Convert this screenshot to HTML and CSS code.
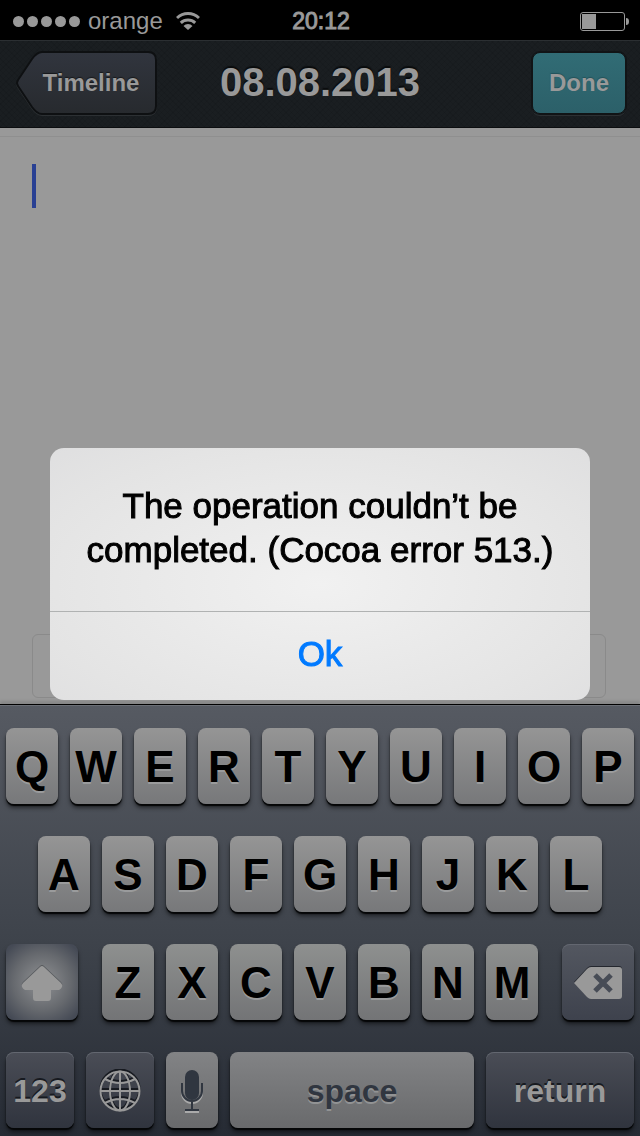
FILE: index.html
```
<!DOCTYPE html>
<html lang="en">

<head>
    <meta charset="UTF-8">
    <meta name="viewport" content="width=device-width, initial-scale=1.0">
    <title>08.08.2013</title>
    <link rel="stylesheet" href="styles.css">
</head>

<body>
    <div class="status-bar">
        <div class="status-left">
            <div class="signal"><i></i><i></i><i></i><i></i><i></i></div>
            <span>orange</span>
            <svg class="wifi" width="24" height="18" viewBox="0 0 24 18" fill="none" stroke="#999" stroke-width="3">
                <path d="M1 6a16 16 0 0 1 22 0" />
                <path d="M4.800 10.800a10.500 10.500 0 0 1 14.400 0" />
                <path d="M7.500 14a6 6 0 0 1 9 0L12 18z" fill="#999" stroke="none" />
            </svg>
        </div>
        <span class="clock">20:12</span>
        <div class="status-right">
            <svg width="49" height="20" viewBox="0 0 49 20">
                <rect x="0.5" y="1.5" width="44" height="18" rx="2.5" fill="none" stroke="#999" />
                <rect x="2" y="3" width="14" height="15" fill="#999" />
                <path d="M46 7c2 0 3 1 3 3.500s-1 3.500-3 3.500z" fill="#999" />
            </svg>
        </div>
    </div>

    <header class="nav-bar">
        <button type="button" class="back-btn">
            <svg width="144" height="68" viewBox="0 0 144 68">
                <defs>
                    <linearGradient id="back-fill" x1="0" y1="0" x2="0" y2="1">
                        <stop offset="0" stop-color="#31353e" />
                        <stop offset="1" stop-color="#272a2e" />
                    </linearGradient>
                </defs>
                <path d="M28 4H134q8 0 8 8V58q0 8-8 8H28q-5 0-10-7L4 38q-2-3 0-6L18 11q5-7 10-7z" fill="none" stroke="#2c3033" stroke-width="2" />
                <path d="M28 3H134q8 0 8 8V57q0 8-8 8H28q-5 0-10-7L4 37q-2-3 0-6L18 10q5-7 10-7z" fill="url(#back-fill)" stroke="#0e1012" stroke-width="2" />
            </svg>
            <span>Timeline</span>
        </button>
        <h1>08.08.2013</h1>
        <button type="button" class="done-btn">Done</button>
    </header>

    <main class="editor">
        <div class="caret"></div>
        <input class="tag-field" type="text" aria-label="Tags">
    </main>

    <section class="keyboard" aria-label="Keyboard">
        <div class="key-row">
            <button type="button" class="key">Q</button>
            <button type="button" class="key">W</button>
            <button type="button" class="key">E</button>
            <button type="button" class="key">R</button>
            <button type="button" class="key">T</button>
            <button type="button" class="key">Y</button>
            <button type="button" class="key">U</button>
            <button type="button" class="key">I</button>
            <button type="button" class="key">O</button>
            <button type="button" class="key">P</button>
        </div>
        <div class="key-row key-row-middle">
            <button type="button" class="key">A</button>
            <button type="button" class="key">S</button>
            <button type="button" class="key">D</button>
            <button type="button" class="key">F</button>
            <button type="button" class="key">G</button>
            <button type="button" class="key">H</button>
            <button type="button" class="key">J</button>
            <button type="button" class="key">K</button>
            <button type="button" class="key">L</button>
        </div>
        <div class="key-row key-row-lower">
            <button type="button" class="key key-shift" aria-label="Shift">
                <svg width="42" height="38" viewBox="0 0 42 38">
                    <path d="M19 2q2-2 4 0L40 18q2 2 1 4t-3 3H30v8q0 3-3 3H15q-3 0-3-3v-8H4q-2-1-3-3t1-4z" fill="#55585c" />
                    <path d="M19 3q2-2 4 0L40 19q2 2 1 4t-3 3H30v8q0 3-3 3H15q-3 0-3-3v-8H4q-2-1-3-3t1-4z" fill="#999" />
                </svg>
            </button>
            <button type="button" class="key">Z</button>
            <button type="button" class="key">X</button>
            <button type="button" class="key">C</button>
            <button type="button" class="key">V</button>
            <button type="button" class="key">B</button>
            <button type="button" class="key">N</button>
            <button type="button" class="key">M</button>
            <button type="button" class="key key-dark key-delete" aria-label="Delete">
                <svg width="48" height="34" viewBox="0 0 48 34">
                    <path d="M0 16L13 2q2-2 4-2H45q3 0 3 3V29q0 3-3 3H17q-2 0-4-2z" fill="#24272e" />
                    <path d="M0 17L13 3q2-2 4-2H45q3 0 3 3V30q0 3-3 3H17q-2 0-4-2z" fill="#999" />
                    <path d="M21 9L37 25M37 9L21 25" stroke="#474c56" stroke-width="5" />
                </svg>
            </button>
        </div>
        <div class="key-row key-row-bottom">
            <button type="button" class="key key-dark key-small">123</button>
            <button type="button" class="key key-dark key-small" aria-label="Next keyboard">
                <svg width="42" height="44" viewBox="0 0 42 44" fill="none" stroke-width="2">
                    <g stroke="#171a20">
                        <circle cx="21" cy="20" r="19.500" />
                        <ellipse cx="21" cy="20" rx="10" ry="19.500" />
                        <path d="M21 1V40M1 20H41M6 8Q21 16 36 8M6 32Q21 24 36 32" />
                    </g>
                    <g stroke="#999">
                        <circle cx="21" cy="22" r="19.500" />
                        <ellipse cx="21" cy="22" rx="10" ry="19.500" />
                        <path d="M21 2V42M1 22H41M6 10Q21 18 36 10M6 34Q21 26 36 34" />
                    </g>
                </svg>
            </button>
            <button type="button" class="key key-light key-mic" aria-label="Dictation">
                <svg width="24" height="44" viewBox="0 0 24 44">
                    <path d="M5 43H19" stroke="#aaa" stroke-width="2" />
                    <path d="M2 16V24a10 10 0 0 0 20 0V16" fill="none" stroke="#aaa" stroke-width="2" />
                    <rect x="5" y="1" width="14" height="30" rx="7" fill="#303640" />
                    <path d="M2 14V22a10 10 0 0 0 20 0V14M12 33V40M5 41H19" fill="none" stroke="#303640" stroke-width="2" />
                </svg>
            </button>
            <button type="button" class="key key-light key-space">space</button>
            <button type="button" class="key key-dark key-return">return</button>
        </div>
    </section>

    <!-- Alert -->
    <div class="overlay">
        <div class="alert" role="alertdialog" aria-labelledby="alert-text">
            <p id="alert-text">The operation couldn’t be completed. (Cocoa error 513.)</p>
            <button type="button" class="alert-btn">Ok</button>
        </div>
    </div>
</body>

</html>
```
FILE: styles.css
```
* {
    box-sizing: border-box;
    margin: 0;
    padding: 0;
}

body {
    display: flex;
    flex-direction: column;
    min-height: 100vh;
    font-family: "Liberation Sans", Arial, sans-serif;
    background-color: #999;
    color: #999;
}

button,
input {
    font-family: inherit;
    border: none;
}

button {
    cursor: pointer;
}

svg {
    display: block;
}

/* Status bar */
.status-bar {
    display: grid;
    grid-template-columns: 1fr auto 1fr;
    align-items: center;
    height: 40px;
    padding: 2px 11px 0 13px;
    background-color: #000;
    font-size: 24px;
    line-height: 38px;
}

.status-left {
    display: flex;
    align-items: center;
    gap: 13px;
}

.signal {
    display: flex;
    gap: 3px;
    margin-right: -5px;
}

.signal i {
    width: 11px;
    height: 11px;
    border-radius: 50%;
    background-color: #999;
}

.clock {
    -webkit-text-stroke: 1px #999;
    font-size: 23px;
}

.status-right {
    display: flex;
    justify-content: flex-end;
}

/* Navigation bar */
.nav-bar {
    display: grid;
    grid-template-columns: 1fr auto 1fr;
    align-items: center;
    height: 88px;
    padding: 0 14px 2px;
    border-top: 1px solid #2b2f32;
    border-bottom: 1px solid #0c0e10;
    background-color: #1a1e21;
    background-image:
        repeating-linear-gradient(45deg, rgba(0, 0, 0, 0.07) 0 1px, transparent 1px 4px),
        repeating-linear-gradient(-45deg, rgba(0, 0, 0, 0.07) 0 1px, transparent 1px 4px);
}

.nav-bar h1 {
    padding-bottom: 2px;
    font-size: 40px;
    line-height: 48px;
    text-shadow: 0 -2px 1px #0a0c0d;
}

.back-btn,
.done-btn {
    color: #999;
    font-size: 24px;
    font-weight: bold;
}

.back-btn {
    position: relative;
    justify-self: start;
    width: 144px;
    height: 68px;
    padding-left: 10px;
    background: none;
    text-shadow: 0 -1px 1px #16181b;
}

.back-btn svg {
    position: absolute;
    top: 0;
    left: 0;
}

.back-btn span {
    position: relative;
}

.done-btn {
    justify-self: end;
    width: 94px;
    height: 62px;
    border: 1px solid #111416;
    border-radius: 8px;
    background: linear-gradient(#316c75, #2c6069);
    box-shadow: 0 0 0 1px #111416, 0 2px 0 #2c3033;
    text-shadow: 0 -1px 1px #23525a;
}

/* Editor */
.editor {
    display: flex;
    flex-direction: column;
    flex: 1;
    justify-content: space-between;
    min-height: 240px;
    margin-top: 8px;
    padding: 27px 34px 6px 32px;
    border-top: 1px solid #8f8f8f;
}

.caret {
    width: 4px;
    height: 44px;
    background-color: #294093;
}

.tag-field {
    width: 100%;
    height: 64px;
    padding: 0 16px;
    border: 1px solid #8a8a8a;
    border-radius: 6px;
    background-color: transparent;
    font-size: 24px;
}

/* Keyboard */
.keyboard {
    display: flex;
    flex-direction: column;
    gap: 32px;
    padding: 23px 6px 8px;
    border-top: 1px solid #000;
    background: linear-gradient(#565a62, #3e434b 55%, #262b34);
    box-shadow: inset 0 1px 0 #6a6e75, 0 -3px 3px rgba(0, 0, 0, 0.12);
}

.key-row {
    display: flex;
    gap: 12px;
}

.key-row-middle {
    padding: 0 32px;
}

.key {
    flex: 1;
    min-width: 0;
    height: 76px;
    display: flex;
    align-items: center;
    justify-content: center;
    padding-top: 2px;
    border-radius: 8px;
    background: linear-gradient(#959595, #77787a);
    box-shadow: 0 2px 1px #050607, 0 4px 4px rgba(0, 0, 0, 0.5);
    color: #000;
    font-size: 44px;
    font-weight: bold;
    text-shadow: 0 2px 0 #9a9b9c;
}

.key-row-lower .key {
    background: linear-gradient(#8e908f, #737476);
}

.key-row-lower .key-shift {
    flex: 0 0 72px;
    margin-right: 12px;
    background: radial-gradient(circle, #85878a 15%, #66696e 55%, #454a55 90%);
}

.key-row-lower .key-delete {
    flex: 0 0 72px;
    margin-left: 12px;
    background: linear-gradient(#535760, #3e424d);
}

.key-dark {
    background: linear-gradient(#4a4d56, #30343e);
    box-shadow: inset 0 1px 0 #636770, 0 2px 1px #050607, 0 4px 4px rgba(0, 0, 0, 0.5);
    color: #999;
    text-shadow: 0 -2px 0 #171a20;
}

.key-light {
    background: linear-gradient(#828385, #696a6c);
    color: #303640;
    text-shadow: 0 2px 0 #929394;
}

.key-row-bottom .key {
    font-size: 32px;
}

.key-small {
    flex: 0 0 68px;
}

.key-mic {
    flex: 0 0 52px;
}

.key-return {
    flex: 0 0 148px;
}

/* Alert */
.overlay {
    position: fixed;
    top: 0;
    left: 0;
    width: 100%;
    height: 100%;
    display: flex;
    align-items: center;
    justify-content: center;
    padding: 12px 50px 0;
}

.alert {
    width: 100%;
    max-width: 540px;
    border-radius: 14px;
    overflow: hidden;
    background: radial-gradient(ellipse at 50% 54%, #f1f1f1, #e4e4e4 75%, #dfdfe0);
    color: #000;
    font-size: 35px;
    line-height: 44px;
    text-align: center;
}

.alert p {
    padding: 36px 32px 39px;
    -webkit-text-stroke: 1px #000;
}

.alert-btn {
    width: 100%;
    height: 89px;
    padding-bottom: 4px;
    border-top: 1px solid #b0b2b2;
    background: none;
    color: #007aff;
    font-size: 35px;
    -webkit-text-stroke: 1px #007aff;
}
```
